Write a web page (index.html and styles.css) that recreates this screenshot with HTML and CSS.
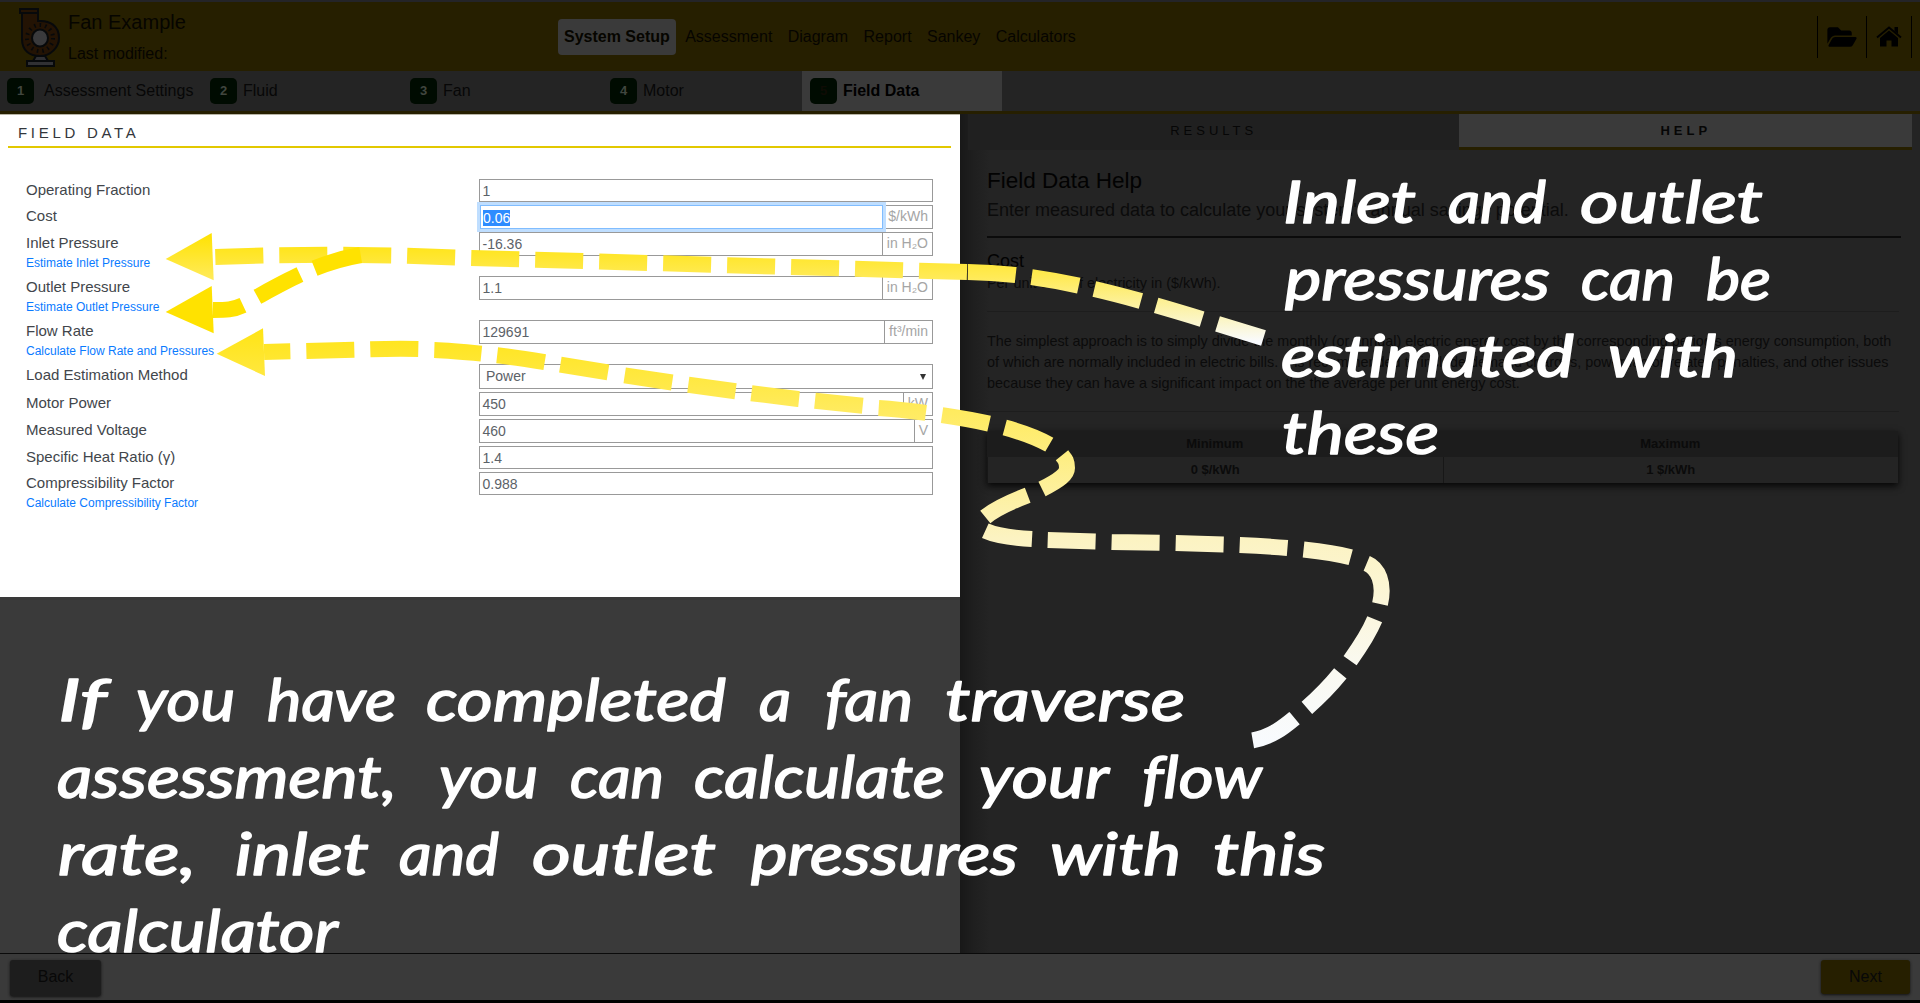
FILE: index.html
```html
<!DOCTYPE html>
<html lang="en">
<head>
<meta charset="utf-8">
<title>Fan Example - Field Data</title>
<link rel="stylesheet" href="styles.css">
</head>
<body>
<div class="app">
  <header class="topbar">
    <svg class="logo" width="42" height="60" viewBox="0 0 42 60">
      <g stroke="#07090b" stroke-width="2" fill="#231304">
        <path d="M3 6V32C3 44 11 49 21 49C32 49 40 40 40 31C40 19 31 13 19 14V6Z"/>
        <path d="M1 2H19V6H1Z"/>
        <path d="M17 49H26L29 54H14Z" fill="#303033"/>
        <path d="M8 54H35V59H8Z" fill="#303033"/>
        <circle cx="21" cy="31" r="13" fill="none" stroke-width="4" stroke-dasharray="1.5 4"/>
        <ellipse cx="21" cy="31" rx="8" ry="8.5" fill="#3a3a3c"/>
      </g>
    </svg>
    <div class="title">
      <div class="name">Fan Example</div>
      <div class="modified">Last modified:</div>
    </div>
    <nav class="tabs">
      <span class="tab active">System Setup</span>
      <span class="tab">Assessment</span>
      <span class="tab">Diagram</span>
      <span class="tab">Report</span>
      <span class="tab">Sankey</span>
      <span class="tab">Calculators</span>
    </nav>
    <div class="tools">
      <span class="tool folder"><svg width="30" height="26" viewBox="0 0 576 512"><path d="M572.7 292.1L500.3 416.2A64 64 0 0 1 445 448H45c-18.500 0-30-20-20.700-36l72.400-124.200A64 64 0 0 1 152 256h400c18.500 0 30 20 20.700 36.100zM152 224h328v-48c0-26.500-21.500-48-48-48H272l-64-64H48C21.500 64 0 85.500 0 112v278l69-118.400C86.200 242.300 118 224 152 224z"/></svg></span>
      <span class="tool home"><svg width="26" height="22" viewBox="0 0 26 22"><path d="M4 12L13 4.500L22 12V20.500H15.500V14.500H10.500V20.500H4Z"/><path d="M1 11.500L13 1.500L25 11.500" fill="none" stroke="#000" stroke-width="2"/><path d="M18.500 1H22V8L18.500 5Z"/></svg></span>
    </div>
  </header>

  <div class="steps">
    <div class="step first"><span class="num">1</span>Assessment Settings</div>
    <div class="step"><span class="num">2</span>Fluid</div>
    <div class="step"><span class="num">3</span>Fan</div>
    <div class="step"><span class="num">4</span>Motor</div>
    <div class="step current"><span class="num">5</span>Field Data</div>
  </div>

  <main class="main">
    <section class="form-pane">
      <div class="form">
        <h1 class="form-title">FIELD DATA</h1>
        <div class="row"><div class="label">Operating Fraction</div><div class="field short"><span class="value">1</span></div></div>
        <div class="row r27"><div class="label">Cost</div><div class="field"><span class="value focus"><mark>0.06</mark></span><span class="unit">$/kWh</span></div></div>
        <div class="row r44"><div class="label">Inlet Pressure<a class="link">Estimate Inlet Pressure</a></div><div class="field"><span class="value">-16.36</span><span class="unit">in H₂O</span></div></div>
        <div class="row r44"><div class="label">Outlet Pressure<a class="link">Estimate Outlet Pressure</a></div><div class="field"><span class="value">1.1</span><span class="unit">in H₂O</span></div></div>
        <div class="row r44"><div class="label">Flow Rate<a class="link">Calculate Flow Rate and Pressures</a></div><div class="field"><span class="value">129691</span><span class="unit">ft³/min</span></div></div>
        <div class="row r28"><div class="label">Load Estimation Method</div><div class="field select"><span class="value">Power</span><span class="caret"></span></div></div>
        <div class="row r27"><div class="label">Motor Power</div><div class="field"><span class="value">450</span><span class="unit">kW</span></div></div>
        <div class="row r27"><div class="label">Measured Voltage</div><div class="field"><span class="value">460</span><span class="unit">V</span></div></div>
        <div class="row"><div class="label">Specific Heat Ratio (γ)</div><div class="field short"><span class="value">1.4</span></div></div>
        <div class="row r44"><div class="label">Compressibility Factor<a class="link">Calculate Compressibility Factor</a></div><div class="field short"><span class="value">0.988</span></div></div>
      </div>
    </section>
    <section class="side">
      <div class="side-tabs"><div class="side-tab">RESULTS</div><div class="side-tab on">HELP</div></div>
      <div class="help">
        <h2>Field Data Help</h2>
        <p class="lead">Enter measured data to calculate your system's annual savings potential.</p>
        <h3>Cost</h3>
        <p class="desc">Per unit cost of electricity in ($/kWh).</p>
        <p class="body">The simplest approach is to simply divide the monthly (or annual) electric energy cost by the corresponding period's energy consumption, both<br>of which are normally included in electric bills. It is recommended to include demand charges, power factor-related penalties, and other issues<br>because they can have a significant impact on the the average per unit energy cost.</p>
        <div class="range">
          <div class="th">Minimum</div><div class="th">Maximum</div>
          <div class="td">0 $/kWh</div><div class="td">1 $/kWh</div>
        </div>
      </div>
    </section>
  </main>

  <footer class="footer"><span class="btn back">Back</span><span class="btn next">Next</span></footer>

  <svg class="notes" width="1920" height="1003" viewBox="0 0 1920 1003">
    <defs>
      <linearGradient id="fadeInlet" gradientUnits="userSpaceOnUse" x1="0" y1="233" x2="0" y2="342">
        <stop offset="0" stop-color="#ffe200"/><stop offset=".4" stop-color="#ffea55"/><stop offset="1" stop-color="#f9fbff"/>
      </linearGradient>
      <linearGradient id="fadeFlow" gradientUnits="userSpaceOnUse" x1="0" y1="328" x2="0" y2="748">
        <stop offset="0" stop-color="#ffe414"/><stop offset=".2" stop-color="#ffeb60"/><stop offset=".5" stop-color="#fcf3c2"/><stop offset=".8" stop-color="#faf9f0"/><stop offset="1" stop-color="#f8fbff"/>
      </linearGradient>
    </defs>
    <path class="dash" stroke="url(#fadeInlet)" d="M1263.500 338C1150 303 1060 273 967 272M967 272L460 257.600C376 254 300 254 213 257"/>
    <path fill="url(#fadeInlet)" d="M165.700 259L211.700 233L213.700 280.300Z"/>
    <path class="dash" stroke="#ffe200" d="M360.700 255C320 262 290 279 257 297M243 305.300C233 310 226 310 213 310"/>
    <path fill="#ffe200" d="M165.700 312L211.700 286L213.700 333.300Z"/>
    <path class="dash" stroke="url(#fadeFlow)" d="M1252.700 740.300C1272 737 1285 726 1294.700 718C1315 702 1335 682 1350.300 660.300M1350.300 660.300C1362 644 1369 633 1374.700 619.300M1380 604C1385 583 1378 568 1366.700 563.300M1350.700 557.300C1335 553 1315 550.500 1287.700 548C1240 544 1180 543 1111.700 542L1047.700 540M1032 539C1014 538 997 536 985.300 530.700M985.300 517C995 509 1010 502 1027.700 495.300M1042 489C1060 480 1067 474 1067 468C1067 461 1065 459 1062 455.300M1049.300 444.700C1036 437 1020 431 989.300 423.700C960 417 910 410 878.700 408M862.700 405.700L798 399C740 392 690 385.500 624.300 375.300M608 372.300C560 365 520 357 482 353.700C460 351.500 450 350.500 434.300 350M418.300 349C400 348.600 380 349 370 349.300L264 352"/>
    <path fill="url(#fadeFlow)" d="M216.700 353.700L263 328.300L265 376Z"/>
    <g class="script">
      <text y="223"><tspan x="1283" textLength="133" lengthAdjust="spacingAndGlyphs">Inlet</tspan><tspan x="1448" textLength="98" lengthAdjust="spacingAndGlyphs">and</tspan><tspan x="1580" textLength="183" lengthAdjust="spacingAndGlyphs">outlet</tspan></text>
      <text y="300"><tspan x="1285" textLength="265" lengthAdjust="spacingAndGlyphs">pressures</tspan><tspan x="1581" textLength="94" lengthAdjust="spacingAndGlyphs">can</tspan><tspan x="1706" textLength="65" lengthAdjust="spacingAndGlyphs">be</tspan></text>
      <text y="377"><tspan x="1281" textLength="293" lengthAdjust="spacingAndGlyphs">estimated</tspan><tspan x="1608" textLength="130" lengthAdjust="spacingAndGlyphs">with</tspan></text>
      <text y="454"><tspan x="1282" textLength="157" lengthAdjust="spacingAndGlyphs">these</tspan></text>
      <text y="721"><tspan x="58" textLength="49" lengthAdjust="spacingAndGlyphs">If</tspan><tspan x="136" textLength="99" lengthAdjust="spacingAndGlyphs">you</tspan><tspan x="267" textLength="129" lengthAdjust="spacingAndGlyphs">have</tspan><tspan x="426" textLength="300" lengthAdjust="spacingAndGlyphs">completed</tspan><tspan x="759" textLength="32" lengthAdjust="spacingAndGlyphs">a</tspan><tspan x="825" textLength="88" lengthAdjust="spacingAndGlyphs">fan</tspan><tspan x="945" textLength="240" lengthAdjust="spacingAndGlyphs">traverse</tspan></text>
      <text y="798"><tspan x="57" textLength="340" lengthAdjust="spacingAndGlyphs">assessment,</tspan><tspan x="439" textLength="99" lengthAdjust="spacingAndGlyphs">you</tspan><tspan x="570" textLength="94" lengthAdjust="spacingAndGlyphs">can</tspan><tspan x="694" textLength="251" lengthAdjust="spacingAndGlyphs">calculate</tspan><tspan x="979" textLength="130" lengthAdjust="spacingAndGlyphs">your</tspan><tspan x="1142" textLength="120" lengthAdjust="spacingAndGlyphs">flow</tspan></text>
      <text y="875"><tspan x="58" textLength="138" lengthAdjust="spacingAndGlyphs">rate,</tspan><tspan x="235" textLength="134" lengthAdjust="spacingAndGlyphs">inlet</tspan><tspan x="399" textLength="100" lengthAdjust="spacingAndGlyphs">and</tspan><tspan x="532" textLength="184" lengthAdjust="spacingAndGlyphs">outlet</tspan><tspan x="751" textLength="267" lengthAdjust="spacingAndGlyphs">pressures</tspan><tspan x="1050" textLength="131" lengthAdjust="spacingAndGlyphs">with</tspan><tspan x="1213" textLength="112" lengthAdjust="spacingAndGlyphs">this</tspan></text>
      <text y="952"><tspan x="57" textLength="281" lengthAdjust="spacingAndGlyphs">calculator</tspan></text>
    </g>
  </svg>
</div>
</body>
</html>
```
FILE: styles.css
```css
* { box-sizing: border-box; }
body { margin: 0; font-family: "Liberation Sans", Arial, sans-serif; font-size: 16px; color: #000; background: #242424; }
.app { position: relative; width: 1920px; height: 1003px; overflow: hidden; display: flex; flex-direction: column; border-top: 2px solid #242428; }
.topbar { height: 69px; flex: none; background: #261f00; display: flex; align-items: flex-start; color: #060500; }
.logo { margin: 5px 0 0 19px; flex: none; }
.title { width: 490px; margin-left: 7px; padding-top: 8px; }
.name { font-size: 20px; line-height: 24px; }
.modified { font-size: 16px; line-height: 20px; margin-top: 10px; }
.tabs { display: flex; margin-top: 17px; }
.tab { height: 36px; line-height: 35px; padding: 0 7.700px; }
.tab.active { background: #3a3a3a; border-radius: 4px; font-weight: bold; padding: 0 6px; width: 118px; margin-right: 1.500px; white-space: nowrap; }
.tools { display: flex; margin: 14px 8px 0 auto; height: 42px; border-right: 1px solid #000; }
.tool { display: flex; align-items: center; border-left: 1px solid #000; padding-left: 9px; }
.folder { width: 49px; }
.home { width: 45px; }
.steps { height: 43px; flex: none; display: flex; background: #242424; border-bottom: 3px solid #261f00; color: #070707; }
.step { width: 200px; display: flex; align-items: center; padding: 0 0 1px 8px; gap: 6px; }
.step.first { width: 202px; padding-left: 7px; gap: 10px; }
.num { width: 27px; height: 26px; border-radius: 5px; background: #000b01; color: #41463f; font-size: 13px; font-weight: bold; line-height: 26px; text-align: center; margin-top: 1px; }
.current { background: #3a3a3a; font-weight: bold; color: #000; }
.current .num { color: #0e0b04; }
.main { flex: 1; display: flex; min-height: 0; }
.form-pane { width: 960px; background: #3a3a3a; }
.form { height: 483px; background: #fff; padding: 0 27px 0 26px; border-top: 1px solid #b8b5a6; color: #42464b; }
.form-title { margin: 0 -18px 31px; height: 33px; padding: 8px 0 0 10px; font-size: 15px; font-weight: normal; line-height: 20px; letter-spacing: 3.700px; color: #33373c; border-bottom: 2px solid #e2c800; }
.row { display: flex; height: 26px; align-items: flex-start; }
.r27 { height: 27px; }
.r28 { height: 28px; }
.r44 { height: 44px; }
.label { width: 453px; flex: none; font-size: 15px; line-height: 22px; }
.link { display: block; color: #0a7bff; font-size: 12px; line-height: 18px; }
.field { width: 454px; height: 24px; display: flex; border: 1px solid #999; font-size: 14px; line-height: 23px; background: #fff; }
.short { height: 23px; }
.value { flex: 1; padding-left: 2.500px; color: #5c6268; }
.focus { margin: -1px 0; border: 1px solid #80bdff; box-shadow: 0 0 0 3px #bfdeff; position: relative; padding-left: 2px; line-height: 24px; }
mark { background: #2e8cff; color: #fff; padding: 0; }
.unit { border-left: 1px solid #999; padding: 0 4px; color: #a5a5a5; line-height: 21px; }
.select { height: 25px; align-items: center; }
.select .value { padding-left: 6px; }
.caret { margin-right: 6px; border: 3px solid transparent; border-top: 6px solid #333; border-bottom: 0; }
.side { flex: 1; background: linear-gradient(90deg, #181818, #1f1f1f 14px, #242424 30px); padding: 0 8px; }
.side-tabs { display: flex; height: 36px; font-size: 13px; font-weight: bold; letter-spacing: 4px; text-align: center; color: #000; }
.side-tab { flex: 492; background: #202020; line-height: 33px; font-weight: normal; color: #060606; }
.side-tab.on { flex: 453; background: #3a3a3a; border-bottom: 3px solid #261f00; font-weight: bold; }
.help { padding: 15px 13px 0 19px; color: #0b0b0b; }
.help h2 { margin: 0; font-weight: normal; font-size: 22.500px; line-height: 32px; color: #020202; }
.help h3 { margin: 0; font-weight: normal; font-size: 18px; line-height: 24px; color: #020202; padding-top: 11px; }
.lead { margin: 0; font-size: 18px; line-height: 26px; height: 41px; margin-right: -2px; border-bottom: 2px solid #0b0b0b; white-space: nowrap; }
.desc { margin: 0; height: 39px; font-size: 14.400px; line-height: 20px; border-bottom: 1px solid #1d1d1d; }
.body { margin: 0; height: 100px; padding-top: 19px; font-size: 14.400px; line-height: 21px; white-space: nowrap; border-bottom: 1px solid #1d1d1d; }
.range { display: grid; grid-template-columns: 1fr 1fr; margin-top: 19px; margin-right: 1px; font-size: 13px; font-weight: bold; text-align: center; box-shadow: 0 3px 7px #050505; }
.th { height: 26px; line-height: 26px; background: #1c1c1c; }
.td { height: 26px; line-height: 26px; background: #242424; border-left: 1px solid #171717; }
.footer { height: 50px; flex: none; border-top: 1px solid #0a0a0a; border-bottom: 3px solid #000; background: #3a3a3a; display: flex; justify-content: space-between; padding: 6px 10px 0; color: #080808; }
.btn { text-align: center; border-radius: 3px; line-height: 33px; box-shadow: 0 1px 3px #111; }
.back { width: 91px; height: 36px; background: #1d1d1d; }
.next { width: 89px; height: 34px; background: #261f00; }
.notes { position: absolute; left: 0; top: -2px; }
.dash { fill: none; stroke-width: 16; stroke-dasharray: 48 16; }
.script { font: italic 400 58px "Segoe Print", "Ink Free", Lato, sans-serif; font-variant-ligatures: none; fill: #fff; stroke: #fff; stroke-width: 1.500px; stroke-linejoin: round; }
```
